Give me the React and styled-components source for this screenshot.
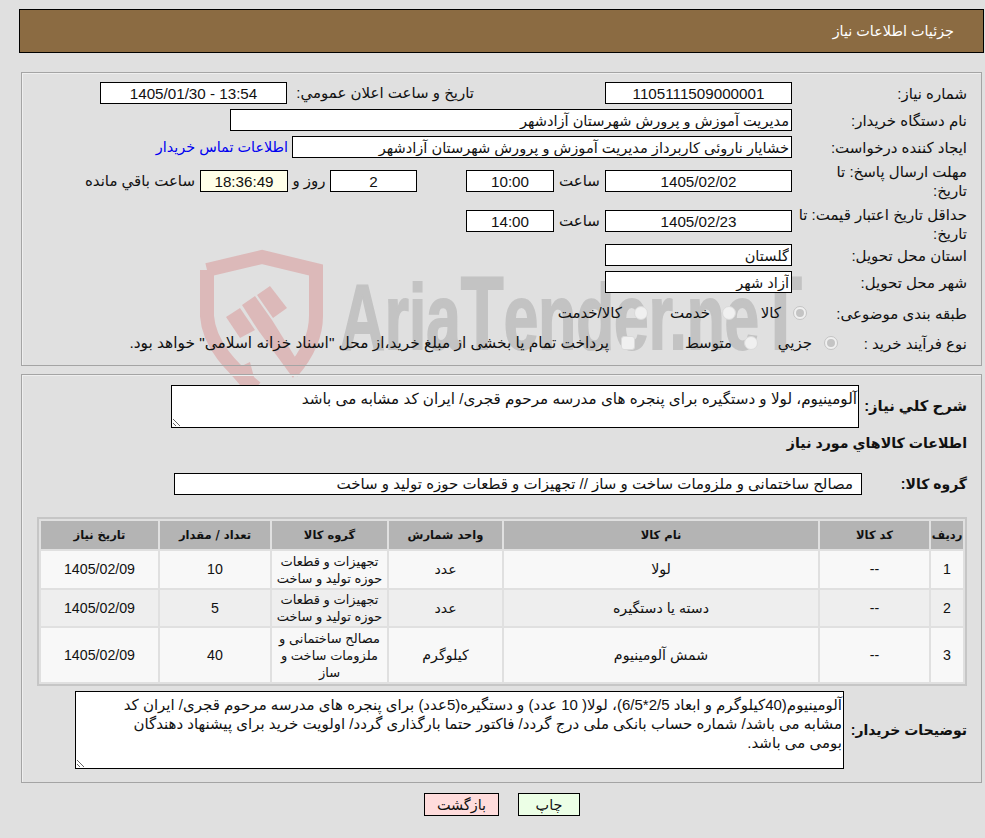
import React from 'react';
import styled, { createGlobalStyle } from 'styled-components';

const GlobalStyle = createGlobalStyle`
  html, body {
    margin: 0;
    padding: 0;
    background: #e0e0e0;
  }
  body {
    direction: rtl;
    color: #111;
    font-family: "Liberation Sans", "DejaVu Sans", sans-serif;
    font-size: 15px;
  }
`;

const Page = styled.div`
  position: relative;
  width: 985px;
  height: 838px;
  padding-top: 9px;
  box-sizing: border-box;
  overflow: hidden;
`;

const Watermark = styled.svg`
  position: absolute;
  left: 190px;
  top: 240px;
  width: 640px;
  height: 160px;
  pointer-events: none;
`;

const Header = styled.div`
  position: relative;
  height: 44px;
  margin: 0 1px 0 19px;
  padding-right: 29px;
  box-sizing: border-box;
  display: flex;
  align-items: center;
  background: #8b6b42;
  border: 1px solid #000;
  color: #fff;
  font-size: 14.4px;
`;

const Panel = styled.section`
  position: relative;
  margin: ${(p) => p.$top}px 3px 0 21px;
  height: ${(p) => p.$height}px;
  padding: 9px 14px 0 0;
  box-sizing: border-box;
  border: 1px solid #a4a4a4;
  box-shadow: inset 1px 1px 0 #efefef;
`;

const Row = styled.div`
  display: flex;
  align-items: center;
  height: ${(p) => p.$height || 22}px;
  margin-top: ${(p) => p.$top || 0}px;
`;

const Label = styled.label`
  flex: none;
  width: ${(p) => p.$w || 175}px;
  line-height: 19px;
  font-weight: ${(p) => (p.$strong ? 700 : 400)};
  font-size: ${(p) => p.$strong || 15}px;
  padding-top: ${(p) => p.$drop || 0}px;
  box-sizing: border-box;
`;

const Field = styled.input`
  flex: none;
  width: ${(p) => p.$w}px;
  height: 22px;
  margin-right: ${(p) => p.$before || 0}px;
  box-sizing: border-box;
  padding: ${(p) => (p.$inset ? '0 8px 0 2px' : '0 2px')};
  border: 1px solid #000;
  border-radius: 0;
  outline: none;
  background: ${(p) => p.$bg || '#fff'};
  color: #111;
  font-family: inherit;
  font-size: ${(p) => p.$size || (p.$center ? 15.2 : 14.6)}px;
  text-align: ${(p) => (p.$center ? 'center' : 'right')};
  direction: rtl;
`;

const Caption = styled.span`
  flex: none;
  width: ${(p) => (p.$w ? `${p.$w}px` : 'auto')};
  margin-right: ${(p) => p.$before || 0}px;
  text-align: ${(p) => (p.$center ? 'center' : 'right')};
  white-space: nowrap;
`;

const ContactLink = styled.a`
  margin-right: 4px;
  color: #0000f0;
  font-size: 14.4px;
  white-space: nowrap;
  cursor: pointer;
`;

const Option = styled.div`
  flex: none;
  width: ${(p) => (p.$w ? `${p.$w}px` : 'auto')};
  display: flex;
  align-items: center;
  gap: 12px;
  font-size: ${(p) => p.$size || 15}px;
  white-space: nowrap;
`;

const Radio = styled.span`
  flex: none;
  position: relative;
  display: block;
  width: 14px;
  height: 14px;
  box-sizing: border-box;
  border: 1px solid ${(p) => (p.$checked ? '#c4c4c4' : '#dadada')};
  border-radius: ${(p) => (p.$square ? '3px' : '50%')};
  background: #f0f0f0;
  &::after {
    content: ${(p) => (p.$checked ? '""' : 'none')};
    position: absolute;
    inset: 2px;
    border-radius: 50%;
    background: #c4c4c4;
  }
`;

const NoteBox = styled.textarea`
  flex: none;
  display: block;
  width: ${(p) => p.$w}px;
  height: ${(p) => p.$h}px;
  box-sizing: border-box;
  padding: 3px 1px 0 ${(p) => p.$endGap || 1}px;
  border: 1px solid #000;
  border-radius: 0;
  outline: none;
  background: #fff;
  color: #111;
  font-family: inherit;
  font-size: ${(p) => p.$size}px;
  line-height: 19px;
  resize: both;
`;

const SectionTitle = styled.div`
  margin-top: 3px;
  height: 25px;
  line-height: 25px;
  font-size: 14.2px;
  font-weight: 700;
`;

const GoodsTable = styled.table`
  width: 928px;
  margin: 22px 0 0 0;
  border: 2px solid #c6c6c6;
  border-spacing: 2px;
  table-layout: fixed;
`;

const HeadCell = styled.th`
  height: 28px;
  padding: 0;
  background: #b4b4b4;
  font-family: "DejaVu Sans", sans-serif;
  font-size: 11.5px;
  font-weight: 700;
`;

const Cell = styled.td`
  height: ${(p) => p.$h}px;
  padding: 0;
  background: ${(p) => (p.$even ? '#eeeeee' : '#f8f8f8')};
  font-size: ${(p) => p.$size || 14.2}px;
  text-align: center;
  line-height: 17px;
`;

const Actions = styled.div`
  display: flex;
  justify-content: center;
  gap: 19px;
  margin-top: 10px;
  padding-left: 19px;
`;

const ActionButton = styled.button`
  width: ${(p) => p.$w}px;
  height: 23px;
  padding: 0;
  border: 1px solid #000;
  border-radius: 0;
  background: ${(p) => p.$bg};
  color: #111;
  font-family: inherit;
  font-size: 14.4px;
`;

const columns = [
  ['ردیف', 32],
  ['کد کالا', 109],
  ['نام کالا', 314],
  ['واحد شمارش', 113],
  ['گروه کالا', 115],
  ['تعداد / مقدار', 110],
  ['تاریخ نیاز', 117],
];

const items = [
  { id: 1, h: 37, name: 'لولا', unit: 'عدد', group: 'تجهیزات و قطعات حوزه تولید و ساخت', qty: 10 },
  { id: 2, h: 36, name: 'دسته یا دستگیره', unit: 'عدد', group: 'تجهیزات و قطعات حوزه تولید و ساخت', qty: 5 },
  { id: 3, h: 54, name: 'شمش آلومینیوم', unit: 'کیلوگرم', group: 'مصالح ساختمانی و ملزومات ساخت و ساز', qty: 40 },
];

const buyerNote =
  'آلومینیوم(40کیلوگرم و ابعاد 2/5*6/5)، لولا( 10 عدد) و دستگیره(5عدد) برای پنجره های مدرسه مرحوم قجری/ ایران کد مشابه می باشد/ شماره حساب بانکی ملی درج گردد/ فاکتور حتما بارگذاری گردد/ اولویت خرید برای پیشنهاد دهندگان بومی می باشد.';

const App = () => (
  <Page>
    <GlobalStyle />
    <Watermark viewBox="190 240 640 160">
      <g fill="none" stroke="#dcb9b9" strokeWidth="14">
        <path d="M207 270 L262 257 L316 270 L316 316 C316 340 304 358 292 372" />
        <path d="M207 270 L207 316 C209 345 232 368 256 388" />
      </g>
      <g fill="#dcb9b9">
        <polygon points="226,317 240,308 255,330 240,338" />
        <polygon points="242,305 255,296 272,320 300,365 293,378 258,330" />
        <polygon points="257,295 270,286 287,308 273,318" />
        <polygon points="229,372 250,362 256,385 240,385" />
      </g>
      <text
        x="340"
        y="349"
        fill="#c3c3c3"
        stroke="#c3c3c3"
        strokeWidth="2"
        fontFamily="Liberation Sans, sans-serif"
        fontWeight="700"
        fontSize="92"
        textLength="462"
        lengthAdjust="spacingAndGlyphs"
        style={{ direction: 'ltr', unicodeBidi: 'bidi-override' }}
      >
        Aria<tspan fontSize="104">T</tspan>ender.ne<tspan fontSize="104">T</tspan>
      </text>
    </Watermark>

    <Header>جزئیات اطلاعات نیاز</Header>

    <Panel $top={19} $height={294}>
      <Row>
        <Label>شماره نیاز:</Label>
        <Field $w={187} $center readOnly value="1105111509000001" />
        <Caption $before={131} $w={187}>تاریخ و ساعت اعلان عمومي:</Caption>
        <Field $w={187} $center readOnly value="13:54 - 1405/01/30" />
      </Row>
      <Row $top={5}>
        <Label>نام دستگاه خریدار:</Label>
        <Field $w={562} readOnly value="مدیریت آموزش و پرورش شهرستان آزادشهر" />
      </Row>
      <Row $top={5}>
        <Label>ایجاد کننده درخواست:</Label>
        <Field $w={500} readOnly value="خشایار ناروئی کاربرداز مدیریت آموزش و پرورش شهرستان آزادشهر" />
        <ContactLink>اطلاعات تماس خریدار</ContactLink>
      </Row>
      <Row $top={12}>
        <Label>مهلت ارسال پاسخ: تا<br />تاریخ:</Label>
        <Field $w={187} $center readOnly value="1405/02/02" />
        <Caption $w={51} $center>ساعت</Caption>
        <Field $w={88} $center readOnly value="10:00" />
        <Field $w={87} $before={49} $center readOnly value="2" />
        <Caption $w={42} $center>روز و</Caption>
        <Field $w={88} $center $bg="#ffffe8" readOnly value="18:36:49" />
        <Caption $before={5}>ساعت باقي مانده</Caption>
      </Row>
      <Row $top={18}>
        <Label $drop={5}>حداقل تاریخ اعتبار قیمت: تا<br />تاریخ:</Label>
        <Field $w={187} $center readOnly value="1405/02/23" />
        <Caption $w={51} $center>ساعت</Caption>
        <Field $w={88} $center readOnly value="14:00" />
      </Row>
      <Row $top={12}>
        <Label>استان محل تحویل:</Label>
        <Field $w={187} readOnly value="گلستان" />
      </Row>
      <Row $top={5}>
        <Label>شهر محل تحویل:</Label>
        <Field $w={187} readOnly value="آزاد شهر" />
      </Row>
      <Row $top={9}>
        <Label $w={160}>طبقه بندی موضوعی:</Label>
        <Option $w={71}><Radio $checked />کالا</Option>
        <Option $w={88}><Radio />خدمت</Option>
        <Option><Radio />کالا/خدمت</Option>
      </Row>
      <Row $top={8}>
        <Label $w={129}>نوع فرآیند خرید :</Label>
        <Option $w={80}><Radio $checked />جزیي</Option>
        <Option $w={123}><Radio />متوسط</Option>
        <Option $size={15.4}><Radio $square />پرداخت تمام یا بخشی از مبلغ خرید،از محل "اسناد خزانه اسلامی" خواهد بود.</Option>
      </Row>
    </Panel>

    <Panel $top={8} $height={409}>
      <Row $height={44}>
        <Label $w={108} $strong={14.8}>شرح کلي نیاز:</Label>
        <NoteBox $w={688} $h={43} $size={15.2} readOnly value="آلومینیوم، لولا و دستگیره برای پنجره های مدرسه مرحوم قجری/ ایران کد مشابه می باشد" />
      </Row>
      <SectionTitle>اطلاعات کالاهاي مورد نیاز</SectionTitle>
      <Row $top={17}>
        <Label $w={105} $strong={14}>گروه کالا:</Label>
        <Field $w={688} $inset $size={15} readOnly value="مصالح ساختمانی و ملزومات ساخت و ساز // تجهیزات و قطعات حوزه تولید و ساخت" />
      </Row>
      <GoodsTable>
        <colgroup>
          {columns.map(([title, w]) => (
            <col key={title} width={w} />
          ))}
        </colgroup>
        <thead>
          <tr>
            {columns.map(([title]) => (
              <HeadCell key={title}>{title}</HeadCell>
            ))}
          </tr>
        </thead>
        <tbody>
          {items.map((item, i) => (
            <tr key={item.id}>
              <Cell $h={item.h} $even={i === 1}>{item.id}</Cell>
              <Cell $even={i === 1}>--</Cell>
              <Cell $even={i === 1}>{item.name}</Cell>
              <Cell $even={i === 1}>{item.unit}</Cell>
              <Cell $even={i === 1} $size={13}>{item.group}</Cell>
              <Cell $even={i === 1}>{item.qty}</Cell>
              <Cell $even={i === 1}>1405/02/09</Cell>
            </tr>
          ))}
        </tbody>
      </GoodsTable>
      <Row $height={78} $top={5}>
        <Label $w={123} $strong={14}>توضیحات خریدار:</Label>
        <NoteBox $w={769} $h={78} $size={15} $endGap={34} readOnly value={buyerNote} />
      </Row>
    </Panel>

    <Actions>
      <ActionButton $w={62} $bg="#ecffe6">چاپ</ActionButton>
      <ActionButton $w={75} $bg="#ffdcdc">بازگشت</ActionButton>
    </Actions>
  </Page>
);

export default App;
